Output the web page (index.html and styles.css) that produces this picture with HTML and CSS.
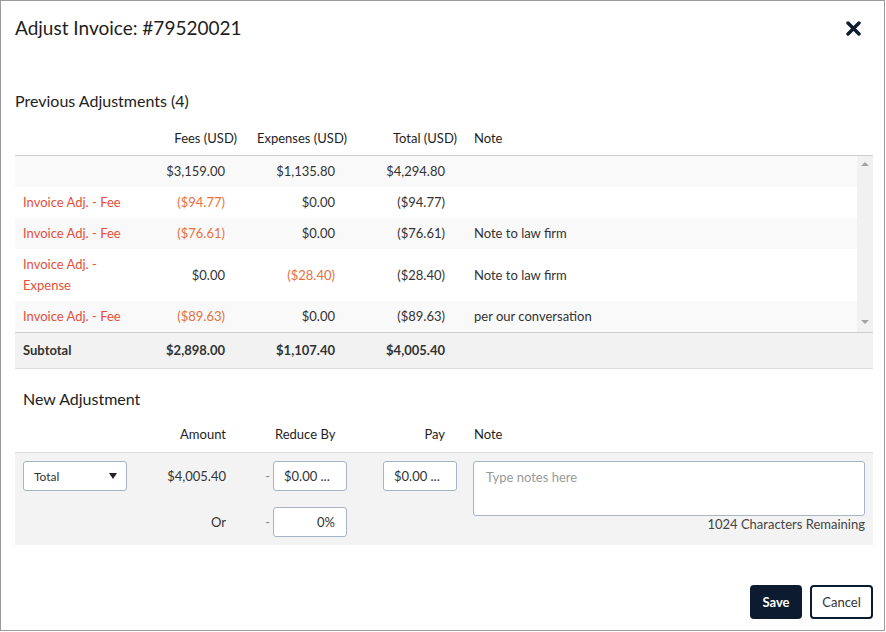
FILE: index.html
```html
<!DOCTYPE html>
<html lang="en">
<head>
  <meta charset="UTF-8" />
  <title>Adjust Invoice</title>
  <link rel="stylesheet" href="styles.css">
</head>
<body>
  <div class="modal">
    <div class="modal-header">
      <h2 class="modal-title">Adjust Invoice: #79520021</h2>
      <button class="close-btn" aria-label="Close">
        <svg width="15" height="15" viewBox="0 0 15 15"><path d="M2 2L13 13M13 2L2 13" stroke="#0e1c2f" stroke-width="3.4" stroke-linecap="round"/></svg>
      </button>
    </div>

    <h3 class="section-title">Previous Adjustments (4)</h3>

    <table class="adj-table adj-head">
      <colgroup><col class="c-label"><col class="c-fee"><col class="c-exp"><col class="c-total"><col></colgroup>
      <tr>
        <th></th>
        <th>Fees (USD)</th>
        <th>Expenses (USD)</th>
        <th>Total (USD)</th>
        <th class="note">Note</th>
      </tr>
    </table>

    <div class="adj-scroll">
      <table class="adj-table adj-body">
        <colgroup><col class="c-label"><col class="c-fee"><col class="c-exp"><col class="c-total"><col></colgroup>
        <tr>
          <td class="label"></td>
          <td>$3,159.00</td>
          <td>$1,135.80</td>
          <td>$4,294.80</td>
          <td class="note"></td>
        </tr>
        <tr>
          <td class="label red">Invoice Adj. - Fee</td>
          <td class="neg">($94.77)</td>
          <td>$0.00</td>
          <td>($94.77)</td>
          <td class="note"></td>
        </tr>
        <tr>
          <td class="label red">Invoice Adj. - Fee</td>
          <td class="neg">($76.61)</td>
          <td>$0.00</td>
          <td>($76.61)</td>
          <td class="note">Note to law firm</td>
        </tr>
        <tr>
          <td class="label red">Invoice Adj. - Expense</td>
          <td>$0.00</td>
          <td class="neg">($28.40)</td>
          <td>($28.40)</td>
          <td class="note">Note to law firm</td>
        </tr>
        <tr>
          <td class="label red">Invoice Adj. - Fee</td>
          <td class="neg">($89.63)</td>
          <td>$0.00</td>
          <td>($89.63)</td>
          <td class="note">per our conversation</td>
        </tr>
      </table>
      <div class="scrollbar">
        <span class="arrow up"></span>
        <span class="arrow down"></span>
      </div>
    </div>

    <table class="adj-table adj-foot">
      <colgroup><col class="c-label"><col class="c-fee"><col class="c-exp"><col class="c-total"><col></colgroup>
      <tr>
        <td class="label">Subtotal</td>
        <td>$2,898.00</td>
        <td>$1,107.40</td>
        <td>$4,005.40</td>
        <td class="note"></td>
      </tr>
    </table>

    <h3 class="section-title new-title">New Adjustment</h3>

    <div class="new-grid new-head">
      <div></div>
      <div class="amount">Amount</div>
      <div></div>
      <div class="reduce">Reduce By</div>
      <div></div>
      <div class="pay">Pay</div>
      <div></div>
      <div class="note-h">Note</div>
    </div>

    <div class="new-grid new-body">
      <div class="select">
        <span>Total</span>
        <span class="caret"></span>
      </div>
      <div class="amount">$4,005.40</div>
      <div class="dash">-</div>
      <input class="field" type="text" value="$0.00 ...">
      <input class="field pay-field" type="text" value="$0.00 ...">
      <div class="note-cell">
        <textarea placeholder="Type notes here"></textarea>
        <div class="remaining">1024 Characters Remaining</div>
      </div>
      <div class="amount or">Or</div>
      <div class="dash or">-</div>
      <input class="field pct or" type="text" value="0%">
    </div>

    <div class="modal-footer">
      <button class="btn btn-save">Save</button>
      <button class="btn btn-cancel">Cancel</button>
    </div>
  </div>
</body>
</html>
```

FILE: styles.css
```css
* {
  box-sizing: border-box;
}

body {
  margin: 0;
  font-family: Lato, "Open Sans", sans-serif;
  font-size: 13px;
  color: #333;
  background: #fff;
}

.modal {
  width: 885px;
  height: 631px;
  border: 1px solid #9b9b9b;
  padding: 15px 11px 0 14px;
}

.modal-header {
  display: flex;
  justify-content: space-between;
  align-items: center;
  height: 24px;
}

.modal-title {
  margin: 0;
  font-size: 19px;
  line-height: 24px;
  font-weight: normal;
  color: #1e1e1e;
}

.close-btn {
  margin-right: 12px;
  padding: 0;
  border: none;
  background: none;
  width: 15px;
  height: 15px;
  cursor: pointer;
}

.close-btn svg {
  display: block;
}

.section-title {
  margin: 51px 0 0;
  font-size: 16px;
  line-height: 20px;
  font-weight: normal;
  color: #222;
}

/* previous adjustments */
.adj-table {
  table-layout: fixed;
  border-collapse: separate;
  border-spacing: 0;
  width: 858px;
}

.c-label { width: 140px; }
.c-fee { width: 90px; }
.c-exp { width: 110px; }
.c-total { width: 110px; }

.adj-head {
  border-bottom: 1px solid #cfcfcf;
}

.adj-head th {
  font-weight: normal;
  color: #1e1e1e;
  text-align: right;
  line-height: 16px;
  padding: 19px 8px 9px;
}

.adj-table .note {
  text-align: left;
  padding-left: 9px;
}

.adj-scroll {
  display: flex;
  height: 176px;
}

.adj-body {
  width: 842px;
}

.adj-body td {
  text-align: right;
  line-height: 21px;
  padding: 5px 20px 5px 8px;
}

.adj-body tr:nth-child(odd) td {
  background: #f9f9f9;
}

.adj-table .label {
  text-align: left;
  padding-right: 12px;
}

.red {
  color: #e4503b;
}

.neg {
  color: #e8703c;
}

.scrollbar {
  width: 16px;
  background: #f1f1f1;
  display: flex;
  flex-direction: column;
  justify-content: space-between;
  align-items: center;
  padding: 6px 0 8px;
}

.arrow {
  width: 0;
  height: 0;
  border-left: 4px solid transparent;
  border-right: 4px solid transparent;
}

.arrow.up {
  border-bottom: 4px solid #a3a3a3;
}

.arrow.down {
  border-top: 4px solid #a3a3a3;
}

.adj-foot {
  border-top: 1px solid #cfcfcf;
  border-bottom: 1px solid #dcdcdc;
  background: #f2f2f2;
}

.adj-foot td {
  text-align: right;
  font-weight: bold;
  line-height: 17px;
  padding: 9px 20px 9px 8px;
}

/* new adjustment */
.new-title {
  margin-top: 20px;
  padding-left: 8px;
}

.new-grid {
  display: grid;
  grid-template-columns: 140px 80px 38px 74px 36px 74px 16px 392px;
  width: 858px;
  padding-right: 8px;
}

.new-head {
  line-height: 16px;
  padding-top: 17px;
  padding-bottom: 10px;
  border-bottom: 1px solid #dcdcdc;
  color: #1e1e1e;
}

.new-head .amount {
  text-align: right;
  padding-right: 9px;
}

.new-head .reduce {
  padding-left: 2px;
  white-space: nowrap;
}

.new-head .pay {
  text-align: right;
  padding-right: 12px;
}

.new-head .note-h {
  padding-left: 1px;
}

.new-body {
  background: #f3f3f3;
  grid-template-rows: 30px 30px;
  row-gap: 16px;
  padding-top: 8px;
  padding-bottom: 8px;
  align-items: center;
}

.select {
  grid-column: 1;
  margin-left: 8px;
  width: 104px;
  height: 30px;
  display: flex;
  align-items: center;
  justify-content: space-between;
  padding: 0 9px 0 10px;
  background: #fff;
  border: 1px solid #a7b4c6;
  border-radius: 3px;
  font-size: 12px;
  color: #333;
}

.caret {
  width: 0;
  height: 0;
  border-left: 4px solid transparent;
  border-right: 4px solid transparent;
  border-top: 6px solid #222;
}

.new-body .amount {
  grid-column: 2;
  text-align: right;
  padding-right: 9px;
}

.dash {
  grid-column: 3;
  text-align: right;
  padding-right: 3px;
  color: #8a8a8a;
}

.field {
  grid-column: 4;
  width: 74px;
  height: 30px;
  padding: 0 10px;
  border: 1px solid #a7b4c6;
  border-radius: 3px;
  font-family: inherit;
  font-size: 13px;
  color: #333;
  background: #fff;
}

.pay-field {
  grid-column: 6;
}

.field.pct {
  text-align: right;
  padding-right: 11px;
}

.or {
  grid-row: 2;
}

.note-cell {
  grid-column: 8;
  grid-row: 1 / 3;
  align-self: start;
}

.note-cell textarea {
  display: block;
  width: 392px;
  height: 55px;
  padding: 7px 12px;
  border: 1px solid #a7b4c6;
  border-radius: 3px;
  font-family: inherit;
  font-size: 13px;
  line-height: 16px;
  resize: none;
  color: #333;
}

.note-cell textarea::placeholder {
  color: #999;
}

.remaining {
  text-align: right;
  line-height: 16px;
  color: #444;
}

/* footer */
.modal-footer {
  display: flex;
  justify-content: flex-end;
  gap: 8px;
  margin-top: 40px;
  width: 858px;
}

.btn {
  height: 34px;
  border-radius: 4px;
  font-family: inherit;
  font-size: 13px;
  cursor: pointer;
}

.btn-save {
  width: 52px;
  background: #0c1b2f;
  color: #fff;
  border: none;
  font-weight: bold;
}

.btn-cancel {
  width: 63px;
  background: #fff;
  color: #333;
  border: 2px solid #0c1b2f;
}
```
